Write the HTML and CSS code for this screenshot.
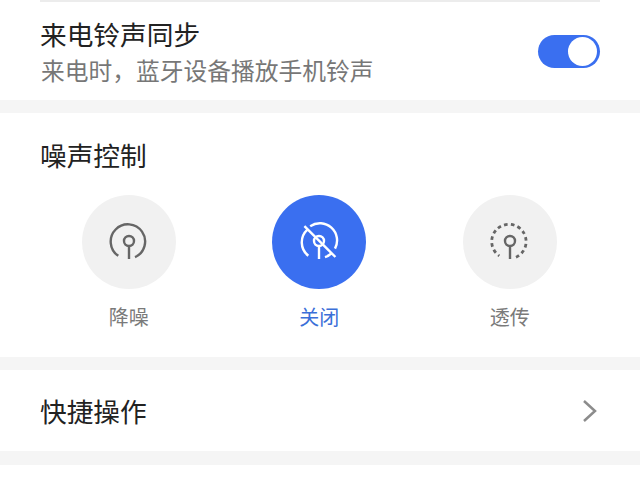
FILE: index.html
```html
<!DOCTYPE html>
<html lang="zh-CN">
<head>
    <meta charset="UTF-8">
    <meta name="viewport" content="width=device-width, initial-scale=1.0">
    <title>耳机设置</title>
    <link rel="stylesheet" href="styles.css">
</head>
<body>
    <section class="card ringtone">
        <div class="top-line"></div>
        <div class="ringtone-row">
            <div class="ringtone-text">
                <h2 class="title">来电铃声同步</h2>
                <p class="subtitle">来电时，蓝牙设备播放手机铃声</p>
            </div>
            <div class="toggle"><span class="knob"></span></div>
        </div>
    </section>

    <section class="card noise">
        <h2 class="title">噪声控制</h2>
        <div class="modes">
            <div class="mode">
                <div class="mode-circle">
                    <svg class="mode-icon" viewBox="0 0 40 40">
                        <path d="M9.3 33.8A17.2 17.2 0 1 1 26 35.2"/>
                        <circle cx="20" cy="19" r="5"/>
                        <path d="M20 24V37"/>
                    </svg>
                </div>
                <span class="mode-label">降噪</span>
            </div>
            <div class="mode active">
                <div class="mode-circle">
                    <svg class="mode-icon" viewBox="0 0 40 40">
                        <path d="M8.4 7.6A17.2 17.2 0 0 0 9.3 33.8"/>
                        <path d="M11.2 4.2A17.2 17.2 0 0 1 36 26.6"/>
                        <path d="M26 35.2Q30 33.8 33 31"/>
                        <circle cx="20" cy="19" r="5"/>
                        <path d="M20 24V37"/>
                        <path d="M5.4 4.2L36.4 35"/>
                    </svg>
                </div>
                <span class="mode-label">关闭</span>
            </div>
            <div class="mode">
                <div class="mode-circle">
                    <svg class="mode-icon" viewBox="0 0 40 40">
                        <path class="dashed" d="M26 35.2A17.2 17.2 0 1 0 9.3 33.8"/>
                        <circle cx="20" cy="19" r="5"/>
                        <path d="M20 24V37"/>
                    </svg>
                </div>
                <span class="mode-label">透传</span>
            </div>
        </div>
    </section>

    <section class="card shortcut">
        <h2 class="title">快捷操作</h2>
        <svg class="chevron" viewBox="0 0 16 24">
            <path d="M2 2L13 12L2 22"/>
        </svg>
    </section>
</body>
</html>
```

FILE: styles.css
```css
html, body {
    margin: 0;
    padding: 0;
}

body {
    width: 640px;
    height: 480px;
    overflow: hidden;
    background: #fff;
    font-family: "Noto Sans CJK SC", "Noto Sans", sans-serif;
}

.card {
    background: #fff;
    box-sizing: border-box;
    border-bottom: 13px solid #f5f5f5;
}

.title {
    margin: 0 0 0 -1px;
    font-size: 26.7px;
    font-weight: 400;
    line-height: 36px;
    color: #222;
}

.subtitle {
    margin: 0;
    font-size: 23.75px;
    line-height: 34px;
    color: #777;
}

/* ringtone row */
.ringtone {
    height: 113px;
}

.top-line {
    height: 2px;
    margin: 0 40px;
    background: #ececec;
}

.ringtone-row {
    display: flex;
    align-items: center;
    justify-content: space-between;
    padding: 14px 40px 0 41px;
}

.ringtone-text {
    display: flex;
    flex-direction: column;
    gap: 1px;
}

.toggle {
    display: flex;
    align-items: center;
    justify-content: flex-end;
    box-sizing: border-box;
    width: 62px;
    height: 33px;
    padding-right: 3px;
    border-radius: 17px;
    background: #3a6ff0;
}

.knob {
    width: 29px;
    height: 29px;
    border-radius: 50%;
    background: #fff;
}

/* noise control */
.noise {
    height: 257px;
    padding: 24px 0 0 0;
}

.noise .title {
    padding-left: 41px;
}

.modes {
    display: grid;
    grid-template-columns: repeat(3, 190.5px);
    padding: 22px 0 0 33.5px;
}

.mode {
    display: flex;
    flex-direction: column;
    align-items: center;
    gap: 14px;
}

.mode-circle {
    display: flex;
    align-items: center;
    justify-content: center;
    width: 94px;
    height: 94px;
    border-radius: 50%;
    background: #f1f1f1;
}

.mode-icon {
    width: 40px;
    height: 40px;
    fill: none;
    stroke: #666;
    stroke-width: 2.4;
}

.dashed {
    stroke-width: 2.8;
    stroke-dasharray: 3.6 3.2;
}

.mode-label {
    font-size: 20px;
    line-height: 28px;
    color: #7a7a7a;
}

.active .mode-circle {
    background: #3a6ff0;
}

.active .mode-icon {
    stroke: #fff;
}

.active .mode-label {
    color: #3b6fd8;
}

/* shortcut row */
.shortcut {
    display: flex;
    align-items: center;
    justify-content: space-between;
    height: 95px;
    padding: 0 42px 0 41px;
    border-bottom-width: 14px;
}

.chevron {
    width: 16px;
    height: 24px;
    fill: none;
    stroke: #8c8c8c;
    stroke-width: 2.5;
}
```
